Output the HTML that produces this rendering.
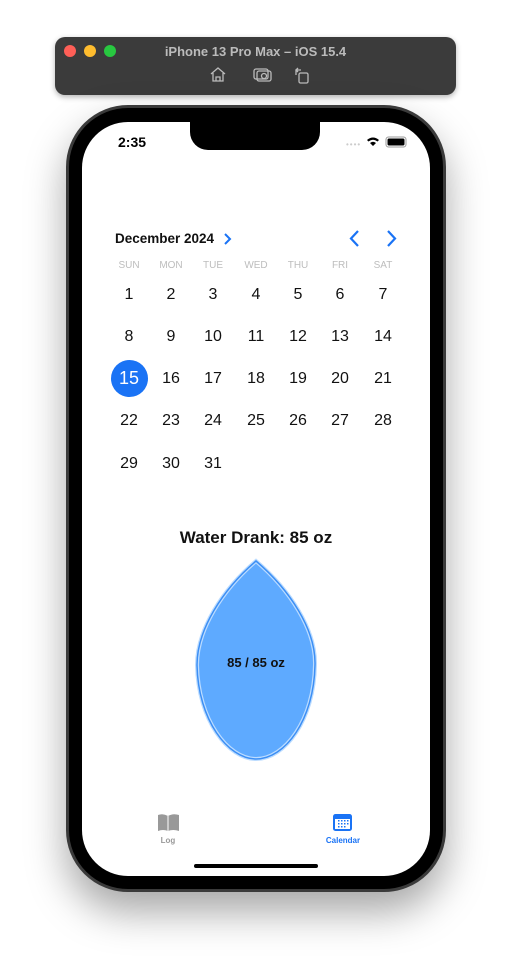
<!DOCTYPE html>
<html><head><meta charset="utf-8"><style>
*{margin:0;padding:0;box-sizing:border-box}
body{width:511px;height:968px;background:#fff;position:relative;overflow:hidden;font-family:"Liberation Sans",sans-serif}
.abs{position:absolute}
.tb{left:55px;top:37px;width:401px;height:58px;background:#3b3b3b;border-radius:10px;box-shadow:0 2px 6px rgba(0,0,0,.3)}
.dot{width:12px;height:12px;border-radius:50%;top:45px}
.phone{left:66px;top:105px;width:380px;height:787px;border-radius:62px;background:#000;border:3px solid #3a3a3a;box-shadow:0 20px 40px rgba(0,0,0,.35)}
.screen{left:82px;top:122px;width:348px;height:754px;border-radius:46px;background:#fff}
.notch{left:190px;top:120px;width:130px;height:30px;background:#000;border-radius:0 0 18px 18px}
.c{position:absolute;width:40px;text-align:center;transform:translateX(-20px)}
.wd{font-size:10px;color:#bdbdbd;top:260px}
.d{font-size:16px;color:#111}
</style></head><body>
<div class="abs tb"></div>
<div class="abs dot" style="left:64px;background:#fe5f57"></div>
<div class="abs dot" style="left:84px;background:#febc2e"></div>
<div class="abs dot" style="left:104px;background:#28c840"></div>
<div class="abs" style="left:55px;width:401px;top:44px;text-align:center;color:#bbb;font-weight:bold;font-size:13px">iPhone 13 Pro Max – iOS 15.4</div>
<svg class="abs" style="left:205px;top:66px" width="110" height="20" fill="none" stroke="#bbb" stroke-width="1.3">
<path d="M6 8 L13 2 L20 8 M8 7 V15 H18 V7 M11 15 V11 H15 V15"/>
<rect x="52" y="5" width="14" height="10" rx="2"/><rect x="49" y="3" width="14" height="10" rx="2"/><circle cx="59" cy="10" r="2.5"/>
<rect x="94" y="7" width="9" height="10" rx="1.5"/><path d="M91 9 V4 H96 M93 2 L91 4 L93 6"/>
</svg>
<div class="abs phone"></div>
<div class="abs screen"></div>
<div class="abs notch"></div>
<div class="abs" style="left:118px;top:134px;font-size:14px;font-weight:bold">2:35</div>
<div class="abs" style="left:346px;top:140px;font-size:8px;color:#ccc;letter-spacing:1px">••••</div>
<svg class="abs" style="left:365px;top:135px" width="45" height="14"><path d="M2 5 Q8 0 14 5 L12.5 6.5 Q8 3 3.5 6.5Z M5 8 Q8 5.5 11 8 L8 11Z" fill="#000"/><rect x="21" y="2" width="20" height="10" rx="2.5" fill="none" stroke="#999"/><rect x="22.5" y="3.5" width="17" height="7" rx="1.5" fill="#000"/></svg>
<div class="abs" style="left:115px;top:231px;font-size:13.5px;font-weight:bold;color:#111">December 2024</div>
<svg class="abs" style="left:222px;top:232px" width="10" height="14" fill="none" stroke="#1a73f5" stroke-width="2"><path d="M3 2 L8 7 L3 12"/></svg>
<svg class="abs" style="left:346px;top:229px" width="55" height="20" fill="none" stroke="#1a73f5" stroke-width="2.2"><path d="M12 2 L5 9.5 L12 17 M42 2 L49 9.5 L42 17"/></svg>
<div class="c wd" style="left:129px">SUN</div><div class="c wd" style="left:171px">MON</div><div class="c wd" style="left:213px">TUE</div><div class="c wd" style="left:256px">WED</div><div class="c wd" style="left:298px">THU</div><div class="c wd" style="left:340px">FRI</div><div class="c wd" style="left:383px">SAT</div>
<div class="abs" style="left:111px;top:360px;width:37px;height:37px;border-radius:50%;background:#1a73f5"></div>
<div id="days"></div>
<script>
var xs=[129,171,213,256,298,340,383],ys=[294,336,378,420,463],h='';
for(var i=1;i<=31;i++){var k=i-1,x=xs[k%7],y=ys[Math.floor(k/7)];
h+='<div class="c d" style="left:'+x+'px;top:'+(y-8)+'px;'+(i==15?'color:#fff;font-size:18px;top:'+(y-10)+'px':'')+'">'+i+'</div>';}
document.getElementById('days').innerHTML=h;
</script>
<div class="abs" style="left:82px;width:348px;top:528px;text-align:center;font-size:17px;font-weight:bold;color:#111">Water Drank: 85 oz</div>
<svg class="abs" style="left:0;top:0" width="511" height="968">
<path d="M256 561 C290 590,316 630,315 665 C314 720,285 759,256 759 C228 759,198 720,197 665 C197 630,222 590,256 561Z" fill="#5eaaff" stroke="#bcdcff" stroke-width="4"/>
<path d="M256 561 C290 590,316 630,315 665 C314 720,285 759,256 759 C228 759,198 720,197 665 C197 630,222 590,256 561Z" fill="none" stroke="#3c8ff5" stroke-width="1.5"/>
<path d="M158 815 Q163 813 168 816 Q173 813 179 815 V831 Q173 829 168 831 Q163 829 158 831Z" fill="#999"/><path d="M168 816 V831" stroke="#fff" stroke-width="1"/>
<rect x="333" y="814" width="19" height="17" rx="2.5" fill="#1a73f5"/><rect x="335" y="819" width="15" height="10" fill="#fff"/>
<g fill="#1a73f5"><rect x="338" y="820" width="1.5" height="1.5"/><rect x="341" y="820" width="1.5" height="1.5"/><rect x="344" y="820" width="1.5" height="1.5"/><rect x="347" y="820" width="1.5" height="1.5"/><rect x="338" y="823" width="1.5" height="1.5"/><rect x="341" y="823" width="1.5" height="1.5"/><rect x="344" y="823" width="1.5" height="1.5"/><rect x="347" y="823" width="1.5" height="1.5"/><rect x="338" y="826" width="1.5" height="1.5"/><rect x="341" y="826" width="1.5" height="1.5"/><rect x="344" y="826" width="1.5" height="1.5"/></g>
<rect x="194" y="864" width="124" height="4" rx="2" fill="#000"/>
</svg>
<div class="abs" style="left:196px;width:120px;top:655px;text-align:center;font-size:13px;font-weight:bold;color:#111">85 / 85 oz</div>
<div class="abs" style="left:148px;width:40px;top:836px;text-align:center;font-size:8px;font-weight:bold;color:#999">Log</div>
<div class="abs" style="left:318px;width:50px;top:836px;text-align:center;font-size:8px;font-weight:bold;color:#1a73f5">Calendar</div>
</body></html>
